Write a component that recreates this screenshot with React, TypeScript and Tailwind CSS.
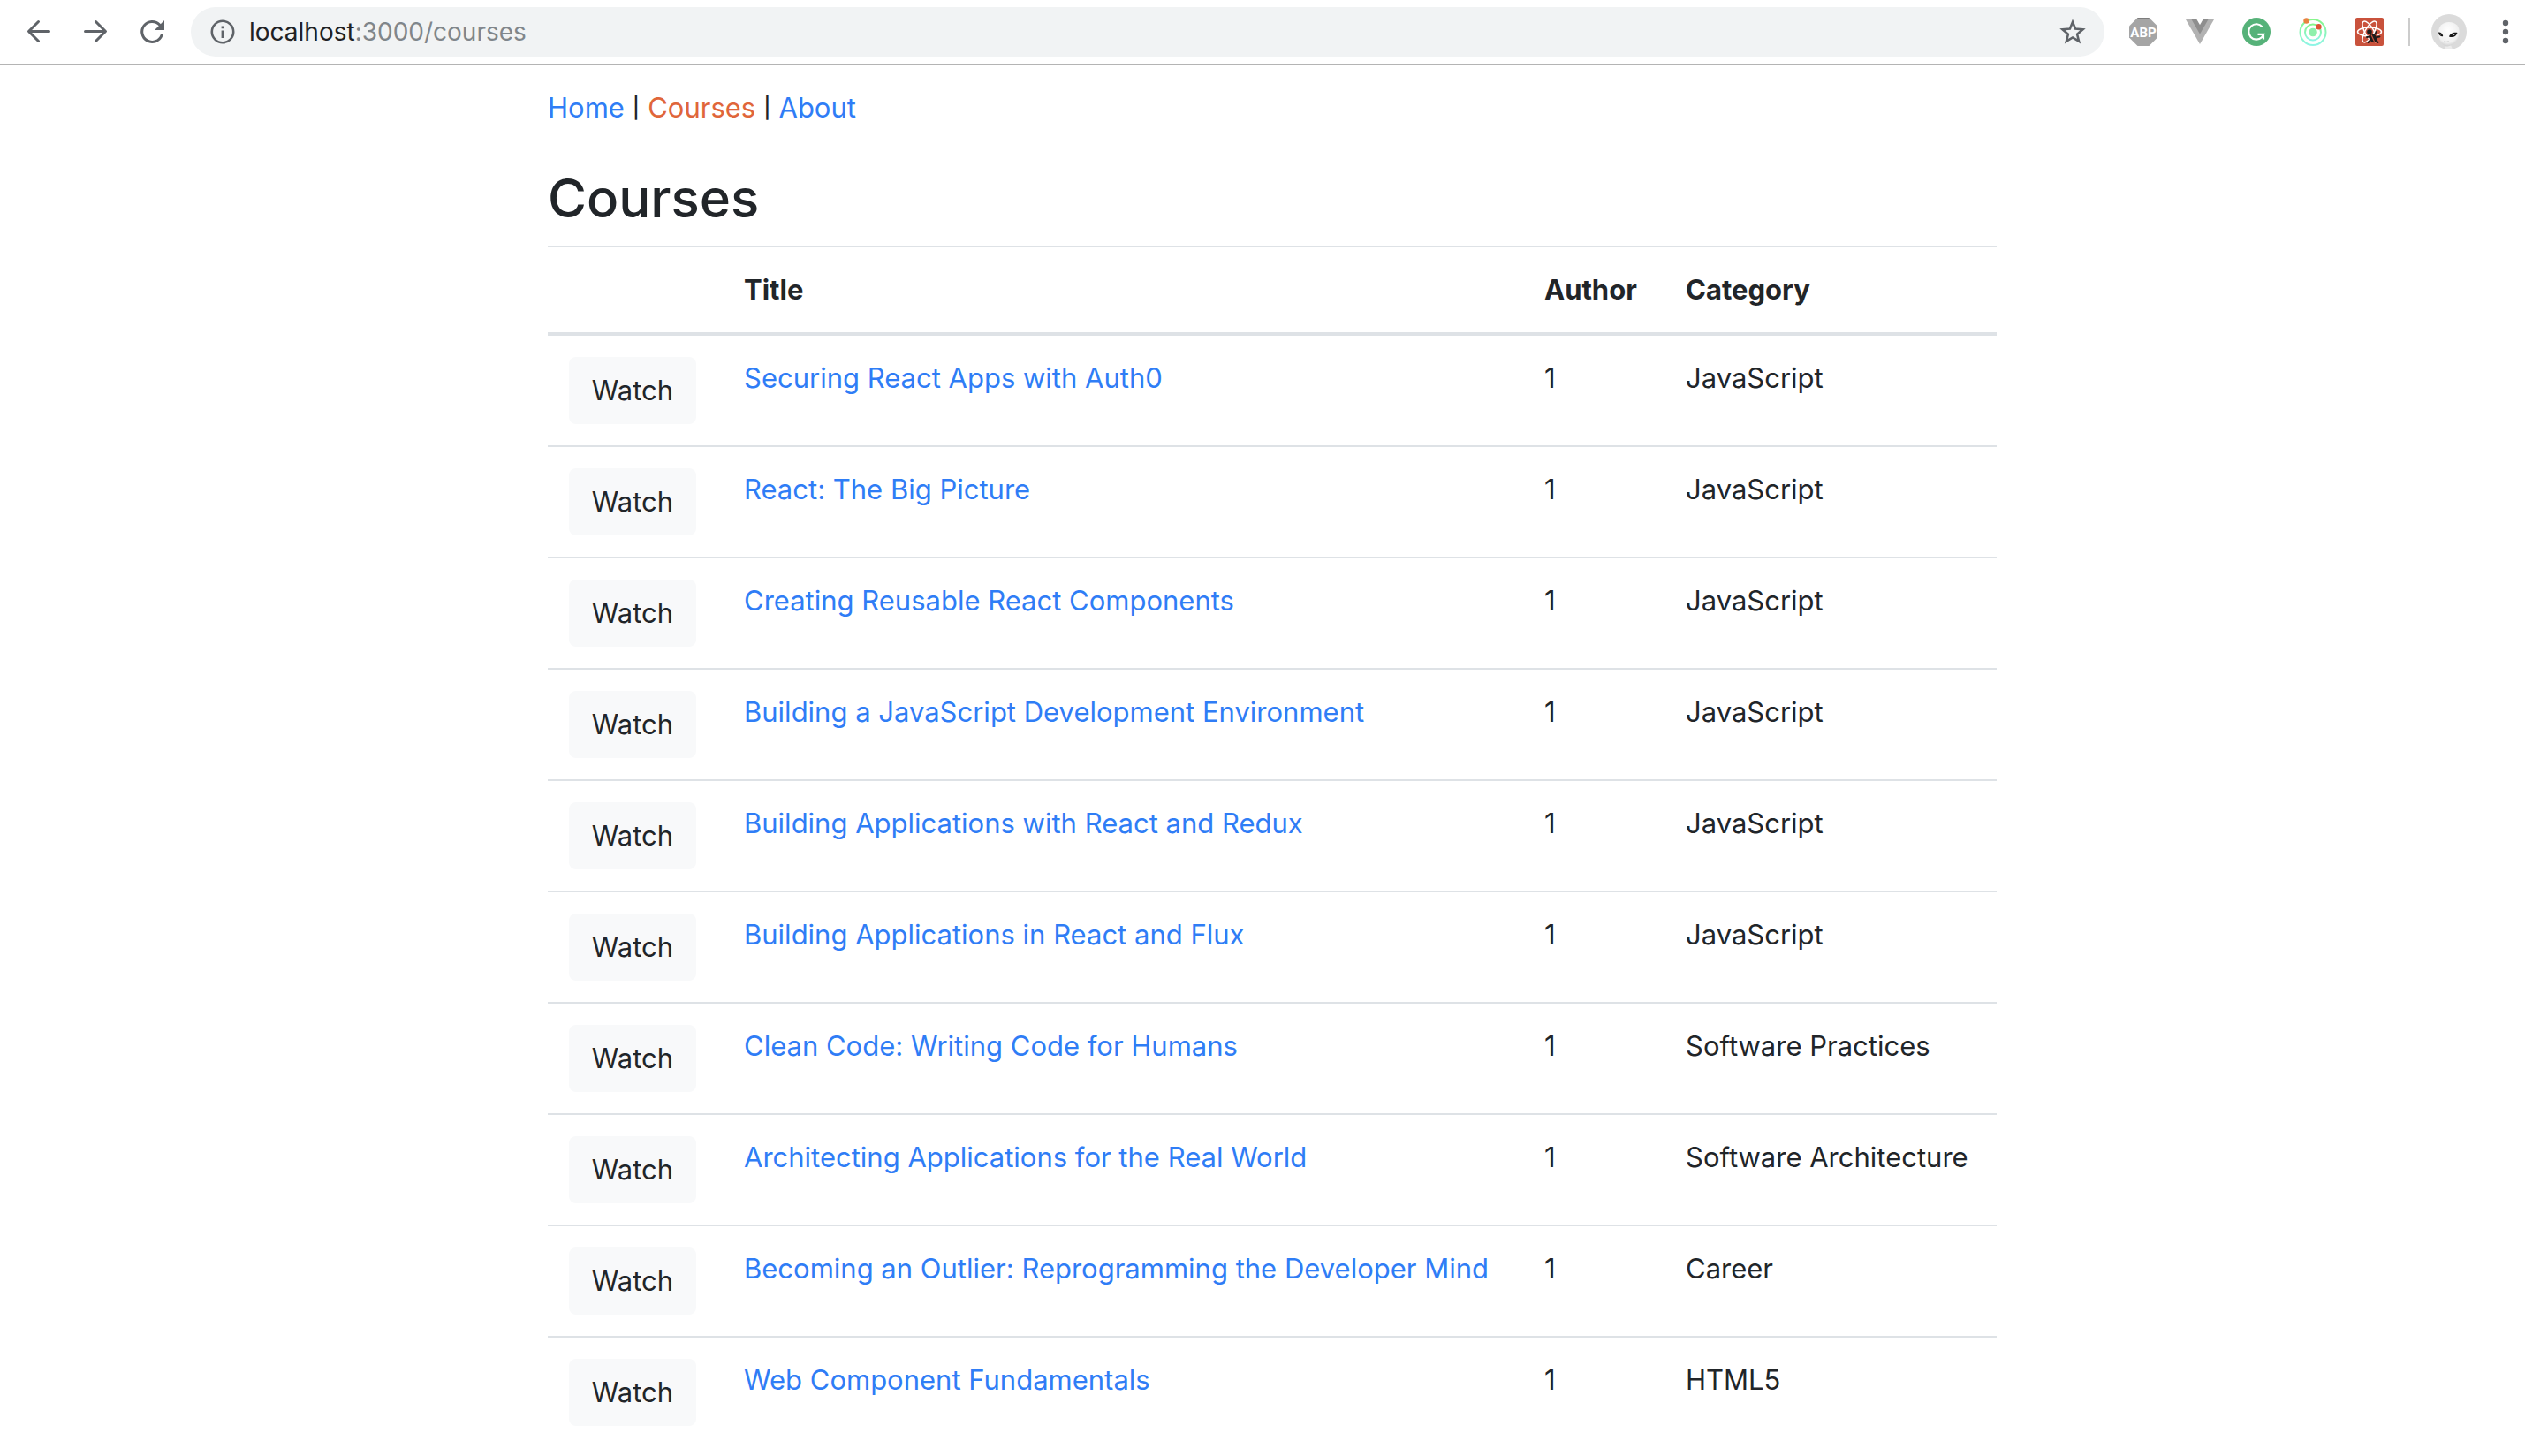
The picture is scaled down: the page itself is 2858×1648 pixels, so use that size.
import { useState } from "react";

const courses = [
  { title: "Securing React Apps with Auth0", author: 1, category: "JavaScript" },
  { title: "React: The Big Picture", author: 1, category: "JavaScript" },
  { title: "Creating Reusable React Components", author: 1, category: "JavaScript" },
  { title: "Building a JavaScript Development Environment", author: 1, category: "JavaScript" },
  { title: "Building Applications with React and Redux", author: 1, category: "JavaScript" },
  { title: "Building Applications in React and Flux", author: 1, category: "JavaScript" },
  { title: "Clean Code: Writing Code for Humans", author: 1, category: "Software Practices" },
  { title: "Architecting Applications for the Real World", author: 1, category: "Software Architecture" },
  { title: "Becoming an Outlier: Reprogramming the Developer Mind", author: 1, category: "Career" },
  { title: "Web Component Fundamentals", author: 1, category: "HTML5" },
];

function BackIcon() {
  return (
    <svg className="size-8" viewBox="0 0 32 32" fill="none" stroke="#5f6368" strokeWidth="3" strokeLinecap="round" strokeLinejoin="round" aria-hidden="true">
      <path d="M27.5 15.5H5M15.5 4.5 4.5 15.5l11 11" />
    </svg>
  );
}

function ForwardIcon() {
  return (
    <svg className="size-8" viewBox="0 0 32 32" fill="none" stroke="#5f6368" strokeWidth="3" strokeLinecap="round" strokeLinejoin="round" aria-hidden="true">
      <path d="M4.5 15.5H27M16.5 4.5l11 11-11 11" />
    </svg>
  );
}

function ReloadIcon() {
  return (
    <svg className="size-8" viewBox="0 0 32 32" aria-hidden="true">
      <path d="M27 20A11.5 11.5 0 1 1 24.6 8" fill="none" stroke="#5f6368" strokeWidth="3" strokeLinecap="round" />
      <path d="M30 3v11H19z" fill="#5f6368" />
    </svg>
  );
}

function InfoIcon() {
  return (
    <svg className="size-7" viewBox="0 0 28 28" aria-hidden="true">
      <circle cx="14" cy="14" r="12.2" fill="none" stroke="#5f6368" strokeWidth="2.6" />
      <path d="M12.6 12.5h2.8v8.5h-2.8zM12.6 7.5h2.8v2.8h-2.8z" fill="#5f6368" />
    </svg>
  );
}

function StarIcon() {
  return (
    <svg className="size-8" viewBox="0 0 32 32" fill="none" stroke="#5f6368" strokeWidth="2.6" aria-hidden="true">
      <path d="M16 5l3.100 7.600 8.400.7-6.400 5.400 2 8L16 22.500 8.900 26.700l2-8-6.400-5.400 8.400-.7z" />
    </svg>
  );
}

function AbpIcon() {
  return (
    <svg className="size-8" viewBox="0 0 32 32" aria-hidden="true">
      <path d="M9.5 0h13L32 9.500v13L22.500 32h-13L0 22.500v-13z" fill="#a5a5a5" />
      <path d="M9.500.5h13" stroke="#7d7d7d" />
      <text x="16" y="21.500" textAnchor="middle" fontFamily="Roboto, sans-serif" fontSize="15" fontWeight="700" fill="#fff">ABP</text>
    </svg>
  );
}

function VueIcon() {
  return (
    <svg className="size-8" viewBox="0 0 32 32" aria-hidden="true">
      <path d="M0 2h32L16 30z" fill="#b2b2b2" />
      <path d="M6.500 2h6L16 8l3.500-6h6L16 18.500z" fill="#8e8e8e" />
      <path d="M12.500 2h7L16 8z" fill="#fff" />
    </svg>
  );
}

function GrammarIcon() {
  return (
    <svg className="size-8" viewBox="0 0 32 32" aria-hidden="true">
      <circle cx="16" cy="16" r="16" fill="#56b279" />
      <path d="M22.500 10.200A8.700 8.700 0 1 0 22 22.200L24 18.800H17.500M24 18.800V24.500" fill="none" stroke="#fff" strokeWidth="2.200" />
    </svg>
  );
}

function OrbitIcon() {
  return (
    <svg className="size-8" viewBox="0 0 32 32" aria-hidden="true">
      <defs>
        <linearGradient id="orbit" x1="0" y1="0" x2="0" y2="1">
          <stop offset="0" stopColor="#86f58a" />
          <stop offset="1" stopColor="#8ff5e6" />
        </linearGradient>
      </defs>
      <g fill="none" stroke="url(#orbit)" strokeWidth="2">
        <circle cx="16" cy="16.500" r="14.500" />
        <circle cx="16" cy="16.500" r="9" />
      </g>
      <circle cx="16" cy="16.500" r="4.800" fill="#8ff0ac" />
      <circle cx="8.500" cy="3.500" r="3.200" fill="#e8833f" />
      <circle cx="22.500" cy="10.300" r="3.200" fill="#dd5535" />
    </svg>
  );
}

function ReactDevIcon() {
  return (
    <svg className="size-8" viewBox="0 0 32 32" aria-hidden="true">
      <rect width="32" height="32" rx="2" fill="#c9523c" />
      <g fill="none" stroke="#fff" strokeWidth="1.500">
        <ellipse cx="16" cy="16" rx="13.500" ry="5" />
        <ellipse cx="16" cy="16" rx="13.500" ry="5" transform="rotate(60 16 16)" />
        <ellipse cx="16" cy="16" rx="13.500" ry="5" transform="rotate(120 16 16)" />
      </g>
      <path d="M15 20l9-3 4 9-11 5z" fill="#c9523c" />
      <circle cx="16" cy="16" r="2.800" fill="#1c1c1c" />
      <ellipse cx="20" cy="23" rx="4" ry="5.500" transform="rotate(-28 20 23)" fill="#1c1c1c" />
      <path d="M15.500 21.500l-2.500.5M16.500 26l-2 2M22.500 18.500l1-2.500M24.500 22l3-.5M24 26l1.500 2" stroke="#1c1c1c" strokeWidth="1.800" strokeLinecap="round" />
      <path d="M18 19.500l3.500 7.500" stroke="#c9523c" strokeWidth="1.200" />
    </svg>
  );
}

function AvatarIcon() {
  return (
    <svg className="size-10" viewBox="0 0 40 40" aria-hidden="true">
      <defs>
        <radialGradient id="face" cx="0.45" cy="0.35" r="0.7">
          <stop offset="0" stopColor="#ffffff" />
          <stop offset="0.7" stopColor="#f0f0f0" />
          <stop offset="1" stopColor="#c4c4c4" />
        </radialGradient>
      </defs>
      <circle cx="20" cy="20" r="20" fill="#dbdbdb" />
      <path d="M17 35l-2 4.300a20 20 0 0 0 9 .2L22 35z" fill="#ececec" />
      <path d="M20 9c7.500 0 12 5 12 11.500C32 28 24.500 36.500 18 36.500S8 28 8 20.500C8 14 12.500 9 20 9z" fill="url(#face)" />
      <path d="M8 20.500c2.500-.3 5 1.500 5.200 4.500-2.800.8-5-1.300-5.200-4.500z" fill="#161616" />
      <path d="M29.500 21c-4-1-8.500 1-9.500 4.500 4.500 1.600 8.500-.5 9.500-4.500z" fill="#161616" />
      <path d="M10 23l1.500-.7M24 24l2.500-1" stroke="#ddd" />
      <path d="M14.500 31c1.500.7 3.500.6 5-.2" fill="none" stroke="#b5b5b5" />
    </svg>
  );
}

function MenuIcon() {
  return (
    <svg className="h-8 w-2" viewBox="0 0 8 32" fill="#5f6368" aria-hidden="true">
      <circle cx="4" cy="6" r="3.200" />
      <circle cx="4" cy="16" r="3.200" />
      <circle cx="4" cy="26" r="3.200" />
    </svg>
  );
}

const extensions = [
  { label: "Adblock Plus", Icon: AbpIcon },
  { label: "Vue devtools", Icon: VueIcon },
  { label: "Grammar checker", Icon: GrammarIcon },
  { label: "Orbit", Icon: OrbitIcon },
  { label: "React developer tools", Icon: ReactDevIcon },
];

function BrowserBar() {
  return (
    <header className="flex items-center border-b border-[#b4b4b4] bg-white pt-2 pr-[18px] pb-[9px] pl-7">
      <div className="flex gap-8">
        <button type="button" aria-label="Back"><BackIcon /></button>
        <button type="button" aria-label="Forward"><ForwardIcon /></button>
        <button type="button" aria-label="Reload"><ReloadIcon /></button>
      </div>
      <div className="ml-7 flex h-14 flex-1 items-center rounded-full bg-[#f1f3f4] pr-5 pl-[22px]">
        <button type="button" aria-label="Site information"><InfoIcon /></button>
        <a href="/courses" className="ml-4 flex-1 text-[28px] leading-8 text-[#80868b]">
          <span className="text-[#202124]">localhost</span>:3000/courses
        </a>
        <button type="button" aria-label="Bookmark this page"><StarIcon /></button>
      </div>
      <div className="ml-7 flex items-center gap-8">
        {extensions.map(({ label, Icon }) => (
          <button key={label} type="button" aria-label={label}><Icon /></button>
        ))}
      </div>
      <div className="ml-7 h-8 w-0.5 bg-[#cccccc]" />
      <button type="button" aria-label="Profile" className="ml-6"><AvatarIcon /></button>
      <button type="button" aria-label="Menu" className="ml-10"><MenuIcon /></button>
    </header>
  );
}

function SiteNav() {
  return (
    <nav className="flex items-center gap-[9px] text-[31px] leading-[48px]">
      <a href="/" className="text-[#2f7df6]">Home</a>
      <span className="text-2xl font-medium">|</span>
      <a href="/courses" aria-current="page" className="text-[#e0663a]">Courses</a>
      <span className="text-2xl font-medium">|</span>
      <a href="/about" className="text-[#2f7df6]">About</a>
    </nav>
  );
}

function CourseTable() {
  const [watching, setWatching] = useState<string | null>(null);
  return (
    <table className="mt-4 w-full table-fixed border-separate border-spacing-0 text-left text-[31px] leading-[48px]">
      <colgroup>
        <col className="w-[198px]" />
        <col />
        <col className="w-[160px]" />
        <col className="w-[376px]" />
      </colgroup>
      <thead>
        <tr>
          <th aria-label="Watch" className="border-t-2 border-b-4 border-[#dee2e6] p-6" />
          <th className="border-t-2 border-b-4 border-[#dee2e6] p-6 font-bold">Title</th>
          <th className="border-t-2 border-b-4 border-[#dee2e6] p-6 font-bold">Author</th>
          <th className="border-t-2 border-b-4 border-[#dee2e6] p-6 font-bold">Category</th>
        </tr>
      </thead>
      <tbody className="[&>tr+tr>td]:border-t-2 [&>tr+tr>td]:border-[#dee2e6]">
        {courses.map((course) => (
          <tr key={course.title} className="align-top">
            <td className="p-6">
              <button
                type="button"
                aria-pressed={watching === course.title}
                onClick={() => setWatching(course.title)}
                className="block h-[76px] w-36 rounded-lg bg-[#f8f9fa]"
              >
                Watch
              </button>
            </td>
            <td className="p-6"><a href="/courses" className="whitespace-nowrap text-[#2f7df6]">{course.title}</a></td>
            <td className="p-6">{course.author}</td>
            <td className="p-6">{course.category}</td>
          </tr>
        ))}
      </tbody>
    </table>
  );
}

export default function App() {
  return (
    <div className="min-h-screen bg-white font-['Inter',sans-serif] text-[#212529]">
      <BrowserBar />
      <div className="pl-[22px]">
        <main className="mx-auto max-w-[1640px] pt-6">
          <SiteNav />
          <h2 className="mt-10 text-[60px] leading-[76px] font-medium">Courses</h2>
          <CourseTable />
        </main>
      </div>
    </div>
  );
}
